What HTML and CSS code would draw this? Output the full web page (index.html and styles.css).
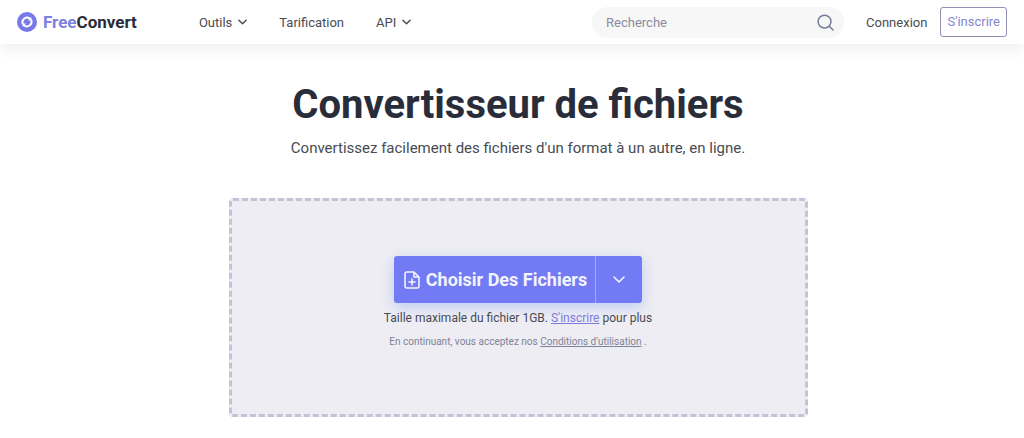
FILE: index.html
```html
<!DOCTYPE html>
<html lang="fr">
<head>
    <meta charset="UTF-8">
    <meta name="viewport" content="width=device-width, initial-scale=1.0">
    <title>Convertisseur de fichiers - FreeConvert</title>
    <link rel="stylesheet" href="styles.css">
</head>
<body>
    <header class="header">
        <a class="logo" href="#">
            <svg class="logo-icon" viewBox="0 0 20 20" aria-hidden="true">
                <circle cx="10" cy="10" r="10" fill="#7879e8"/>
                <path d="M5.6 11.4a4.6 4.6 0 0 1 7-5M14.4 8.6a4.6 4.6 0 0 1-7 5" fill="none" stroke="#fff" stroke-width="2"/>
                <path d="M14.4 5v3.4H11zM5.6 15v-3.4H9z" fill="#fff"/>
            </svg>
            <span class="logo-text"><span class="logo-free">Free</span>Convert</span>
        </a>

        <nav class="nav">
            <button class="nav-item" type="button">Outils
                <svg class="chevron" viewBox="0 0 10 6" aria-hidden="true"><path d="M1 1l4 4 4-4"/></svg>
            </button>
            <a class="nav-item" href="#">Tarification</a>
            <button class="nav-item" type="button">API
                <svg class="chevron" viewBox="0 0 10 6" aria-hidden="true"><path d="M1 1l4 4 4-4"/></svg>
            </button>
        </nav>

        <form class="search">
            <input class="search-input" type="search" placeholder="Recherche" aria-label="Recherche">
            <button class="search-btn" type="button" aria-label="Rechercher">
                <svg viewBox="0 0 18 18" aria-hidden="true"><circle cx="8" cy="8" r="6.8"/><path d="M13 13l4 4"/></svg>
            </button>
        </form>

        <a class="login" href="#">Connexion</a>
        <a class="signup" href="#">S'inscrire</a>
    </header>

    <main class="main">
        <h1 class="title">Convertisseur de fichiers</h1>
        <p class="subtitle">Convertissez facilement des fichiers d'un format à un autre, en ligne.</p>

        <section class="dropzone">
            <div class="choose">
                <button class="choose-btn" type="button">
                    <svg class="file-icon" viewBox="0 0 16 18" aria-hidden="true">
                        <path d="M10 1H3a2 2 0 0 0-2 2v12a2 2 0 0 0 2 2h10a2 2 0 0 0 2-2V6zM10 1v5h5M8 8v6M5 11h6"/>
                    </svg>
                    Choisir Des Fichiers
                </button>
                <button class="choose-more" type="button" aria-label="Autres sources">
                    <svg viewBox="0 0 12 8" aria-hidden="true"><path d="M1 1l5 5 5-5"/></svg>
                </button>
            </div>
            <p class="limit">Taille maximale du fichier 1GB. <a href="#">S'inscrire</a> pour plus</p>
            <p class="terms">En continuant, vous acceptez nos <a href="#">Conditions d'utilisation</a> .</p>
        </section>
    </main>
</body>
</html>
```

FILE: styles.css
```css
* {
    box-sizing: border-box;
}
body {
    margin: 0;
    font-family: Roboto, "Liberation Sans", sans-serif;
    font-size: 13px;
    color: #484b52;
    background: #fff;
}
a {
    color: inherit;
    text-decoration: none;
}
button {
    border: none;
    padding: 0;
    background: none;
    color: inherit;
    font: inherit;
    cursor: pointer;
}
svg {
    display: block;
    fill: none;
    stroke-linecap: round;
    stroke-linejoin: round;
}
.header {
    display: flex;
    align-items: center;
    height: 44px;
    padding: 0 17px;
    box-shadow: 0 4px 16px rgba(0,0,0,0.08);
}
.logo {
    display: flex;
    align-items: center;
    gap: 6px;
}
.logo-icon {
    width: 20px;
    height: 20px;
}
.logo-text {
    font-size: 17px;
    font-weight: bold;
    color: #292d3a;
}
.logo-free {
    color: #7e80e2;
}
.nav {
    display: flex;
    gap: 32px;
    margin-left: 62px;
}
.nav-item {
    display: flex;
    align-items: center;
    gap: 6px;
}
.chevron {
    width: 9px;
    height: 6px;
    stroke: #484b52;
    stroke-width: 1.6;
}
.search {
    display: flex;
    align-items: center;
    width: 252px;
    height: 31px;
    margin-left: auto;
    padding: 0 10px 0 14px;
    border-radius: 16px;
    background: #f7f7f8;
}
.search-input {
    flex: 1;
    min-width: 0;
    padding: 0;
    border: none;
    outline: none;
    background: none;
    font: inherit;
}
.search-input::placeholder {
    color: #8a8c9e;
}
.search-btn svg {
    width: 17px;
    height: 17px;
    stroke: #777a98;
    stroke-width: 1.6;
}
.login {
    margin-left: 22px;
}
.signup {
    margin-left: 13px;
    padding: 0 6px;
    border: 1px solid #8e90b4;
    border-radius: 3px;
    line-height: 28px;
    color: #8586cf;
}
.main {
    padding: 38px 12px 20px 24px;
    text-align: center;
}
.title {
    margin: 0;
    font-size: 40px;
    line-height: 46px;
    color: #292d3a;
}
.subtitle {
    margin: 10px 0 0;
    font-size: 15px;
    line-height: 20px;
}
.dropzone {
    display: flex;
    flex-direction: column;
    align-items: center;
    max-width: 579px;
    margin: 40px auto 0;
    padding: 55px 20px 65px;
    border: 3px dashed #c4c3d6;
    border-radius: 4px;
    background: #eeedf3;
}
.choose {
    display: flex;
    height: 47px;
    border-radius: 3px;
    background: #727af4;
    color: #f3f3ff;
    box-shadow: 0 4px 14px rgba(114,150,244,0.4);
}
.choose svg {
    stroke: #f3f3ff;
    stroke-width: 1.6;
}
.choose-btn {
    display: flex;
    align-items: center;
    gap: 6px;
    padding: 0 8px 0 10px;
    font-size: 18px;
    font-weight: bold;
}
.file-icon {
    width: 16px;
    height: 18px;
}
.choose-more {
    padding: 0 17px;
    border-left: 1px solid #a5aaf8;
}
.choose-more svg {
    width: 12px;
    height: 8px;
}
.limit {
    margin: 7px 0 0;
    font-size: 12px;
    line-height: 16px;
}
.limit a {
    color: #7c7bdc;
    text-decoration: underline;
}
.terms {
    margin: 9px 0 0;
    font-size: 10px;
    line-height: 14px;
    color: #7d8398;
}
.terms a {
    text-decoration: underline;
}
```
